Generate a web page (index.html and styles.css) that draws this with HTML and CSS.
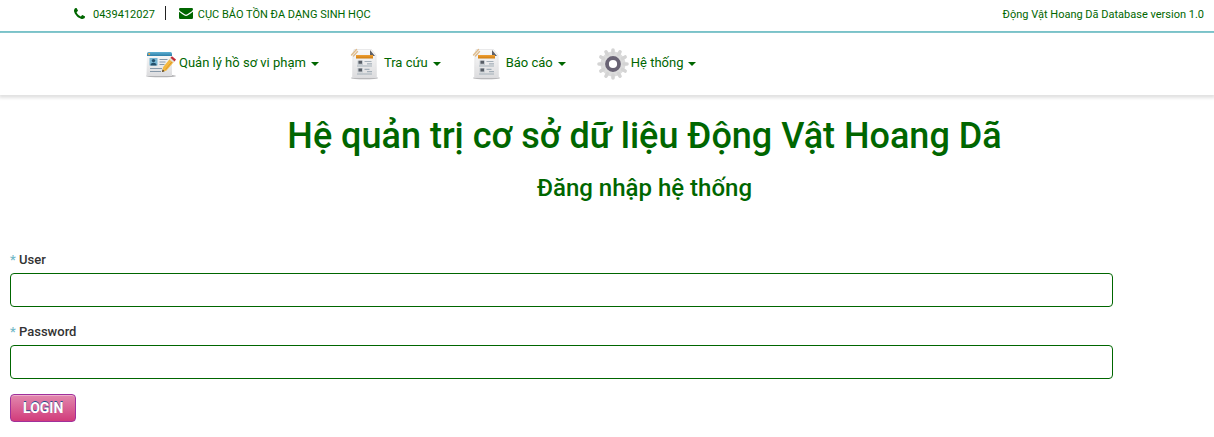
FILE: index.html
```html
<!DOCTYPE html>
<html lang="vi">
<head>
<meta charset="utf-8">
<title>Động Vật Hoang Dã Database</title>
<link rel="stylesheet" href="styles.css">
</head>
<body>
<svg class="defs" aria-hidden="true">
  <defs>
    <linearGradient id="paper" x1="0" y1="0" x2="0" y2="1"><stop offset="0" stop-color="#fafafa"/><stop offset="1" stop-color="#dcdcde"/></linearGradient>
    <linearGradient id="orange" x1="0" y1="0" x2="0" y2="1"><stop offset="0" stop-color="#f0a034"/><stop offset="1" stop-color="#cf7d10"/></linearGradient>
    <linearGradient id="blue" x1="0" y1="0" x2="0" y2="1"><stop offset="0" stop-color="#5fb0d3"/><stop offset="1" stop-color="#2e7fa8"/></linearGradient>
    <symbol id="report" viewBox="0 0 32 32">
      <ellipse cx="14.500" cy="30" rx="13.500" ry="1.300" fill="#a9a9ab"/>
      <path d="M4 1.500h17.500L26 7l.5 23H2.500L3 5z" fill="url(#paper)" stroke="#dcdcde" stroke-width=".6"/>
      <path d="M20 2l5 6h-5z" fill="#5d6068"/>
      <path d="M6 7h17v3.500H6z" fill="url(#orange)"/>
      <path d="M1.500 7L6.500 1.500M3.500 8L7.500 3.500" fill="none" stroke="#dfbc8c" stroke-width="1.400" stroke-linecap="round"/>
      <path d="M7.500 12.500h5.500v4.500H7.500zM7.500 20h5.500v4.500H7.500z" fill="#c5cbd0"/>
      <path d="M8.500 12.800h3.500v3H8.500zM8.500 20.500h3.500v3H8.500z" fill="#575d65"/>
      <path d="M14.500 13.500h7M17 15.800h5M7 18h15M14.500 21.300h5M17 23.600h5M7 26h15" stroke="#a4afb8" stroke-width="1.200"/>
    </symbol>
  </defs>
</svg>

<header class="topbar">
  <div class="contact">
    <span class="contact-item phone">
      <svg class="icon-phone" viewBox="0 0 1408 1408" aria-hidden="true"><path d="M1408 1112q0 27-10 70.500t-21 68.500q-21 50-122 106-94 51-186 51-27 0-52.500-3.500t-57.500-12.500-47.500-14.500-55.500-20.500-49-18q-98-35-175-83-128-79-264.500-215.500T151 776q-48-77-83-175-3-9-18-49t-20.500-55.500T15 449 2.500 391.500-1 339q0-92 51-186Q106 52 156 31q25-11 68.500-21T295 0q14 0 21 3 18 6 53 76 11 19 30 54t35 63.500 31 53.500q3 4 17.500 25t21.500 35.500 7 28.500q0 20-28.500 50t-62 55-62 53-28.500 46q0 9 5 22.500t8.500 20.500 14 24 11.500 19q76 137 174 235t235 174q2 1 19 11.500t24 14 20.500 8.500 22.500 5q18 0 46-28.500t53-62 55-62 50-28.500q14 0 28.500 7t35.500 21.500 25 17.500q25 15 53.500 31t63.500 35 54 30q70 35 76 53 3 7 3 21z"/></svg>
      <span>0439412027</span>
    </span>
    <span class="contact-item">
      <svg class="icon-mail" viewBox="0 0 14 11" aria-hidden="true"><path d="M0 1.200Q0 0 1.200 0h11.600Q14 0 14 1.200c0 .8-.6 1.500-1.200 2L8.300 6.300Q7 7.200 5.700 6.300L1.200 3.200C.6 2.700 0 2 0 1.200zM0 3.700c2 1.600 3.500 2.500 5 3.600q2 1.400 4 0c1.500-1.100 3-2 5-3.600v6.100Q14 11 12.800 11H1.200Q0 11 0 9.800z"/></svg>
      <span>CỤC BẢO TỒN ĐA DẠNG SINH HỌC</span>
    </span>
  </div>
  <span>Động Vật Hoang Dã Database version 1.0</span>
</header>

<nav class="menu">
  <a class="menu-link" href="#">
    <svg class="menu-icon" viewBox="0 0 32 32" aria-hidden="true">
      <ellipse cx="16" cy="28" rx="15" ry="1.300" fill="#b2b2b4"/>
      <path d="M2 5h25v23H1.500z" fill="url(#paper)"/>
      <path d="M2 8V5.500Q2 4 3.500 4h22Q27 4 27 5.500V8z" fill="url(#blue)"/>
      <circle cx="4.200" cy="6" r="1" fill="#f2a33b"/>
      <path d="M4.500 10h8v7.500h-8z" fill="#78b6d3"/>
      <circle cx="8.500" cy="12.600" r="1.700" fill="#24506c"/>
      <path d="M5.500 17.500q0-2.700 3-2.700t3 2.700z" fill="#24506c"/>
      <path d="M14.500 11.500h8M14.500 14h6M14.500 16.500h5M5 20.500h12M5 23.500h11" stroke="#8799a9" stroke-width="1.200"/>
      <path d="M17 24l1.200-5L26 9.500l3.800 3.200L21.500 22.500z" fill="#f3b840"/>
      <path d="M20.500 21.500l8-9.500" stroke="#dc972b"/>
      <path d="M24.300 11.500l1.500-2 4 3.300-1.600 2z" fill="#e2dfd8"/>
      <path d="M25.500 9.800L27 8.200l4 3.400-1.400 1.900z" fill="#c22d39"/>
      <path d="M17 24l.6-2.600 2 1.800z" fill="#43372b"/>
    </svg>
    <span>Quản lý hồ sơ vi phạm</span><i class="caret"></i>
  </a>
  <a class="menu-link" href="#">
    <svg class="menu-icon" aria-hidden="true"><use href="#report"/></svg>
    <span>Tra cứu</span><i class="caret"></i>
  </a>
  <a class="menu-link" href="#">
    <svg class="menu-icon" aria-hidden="true"><use href="#report"/></svg>
    <span>Báo cáo</span><i class="caret"></i>
  </a>
  <a class="menu-link" href="#">
    <svg class="menu-icon" viewBox="0 0 32 32" aria-hidden="true">
      <circle cx="16" cy="16" r="9.500" fill="none" stroke="#dcdcdc" stroke-width="6"/>
      <g stroke="#d4d4d4" stroke-width="3.600" stroke-linecap="round">
        <path d="M16 5V2M16 27v3M5 16H2M27 16h3"/>
        <path d="M16 5V2M16 27v3M5 16H2M27 16h3" transform="rotate(30 16 16)"/>
        <path d="M16 5V2M16 27v3M5 16H2M27 16h3" transform="rotate(60 16 16)"/>
      </g>
      <circle cx="16" cy="16" r="6" fill="#fff" stroke="#696374" stroke-width="3.800"/>
    </svg>
    <span>Hệ thống</span><i class="caret"></i>
  </a>
</nav>

<main>
  <div class="headings">
    <h1>Hệ quản trị cơ sở dữ liệu Động Vật Hoang Dã</h1>
    <h2>Đăng nhập hệ thống</h2>
  </div>
  <form class="login">
    <div class="field">
      <label for="user"><span class="required">*</span> User</label>
      <input id="user" type="text">
    </div>
    <div class="field">
      <label for="password"><span class="required">*</span> Password</label>
      <input id="password" type="password">
    </div>
    <button type="submit">LOGIN</button>
  </form>
</main>
</body>
</html>
```
FILE: styles.css
```css
* {
  box-sizing: border-box;
}

body {
  margin: 0;
  background: #fff;
  color: #060;
  font-family: Roboto, "Open Sans", sans-serif;
  font-size: 13px;
  line-height: 20px;
}

.defs {
  position: absolute;
  width: 0;
  height: 0;
}

.topbar {
  display: flex;
  justify-content: space-between;
  padding: 5px 10px 6px 74px;
  border-bottom: 2px solid #73c1c8;
  font-size: 11px;
}

.contact,
.contact-item {
  display: flex;
  align-items: center;
}

.contact-item {
  gap: 5px;
}

.contact-item svg {
  fill: #060;
}

.phone {
  gap: 8px;
}

.phone::after {
  content: "";
  width: 1px;
  height: 14px;
  margin: 0 13px 4px 2px;
  background: #222;
}

.icon-phone {
  width: 11px;
  height: 11px;
  margin-bottom: 4px;
}

.icon-mail {
  width: 14px;
  height: 11px;
  margin-bottom: 3px;
}

.menu {
  display: flex;
  flex-wrap: wrap;
  gap: 0 31px;
  padding: 15px 10px 15px 145px;
  box-shadow: 0 2px 3px 1px #e2e2e2;
}

.menu-link {
  display: flex;
  align-items: center;
  color: #060;
  text-decoration: none;
}

.menu-link span {
  padding: 0 5px 3px 2px;
}

.menu-icon {
  width: 32px;
  height: 32px;
}

.caret {
  border: 4px solid transparent;
  border-top-color: #060;
  border-bottom: 0;
}

.headings {
  padding: 21px 0 0 75px;
  text-align: center;
}

h1,
h2 {
  margin: 0;
  font-weight: 500;
}

h1 {
  font-size: 36px;
  line-height: 40px;
}

h2 {
  margin-top: 19px;
  font-size: 24px;
  line-height: 26px;
}

.login {
  width: 91.7%;
  padding: 49px 0 15px 10px;
}

.field {
  margin-bottom: 15px;
}

.login label {
  display: block;
  margin-bottom: 3px;
  color: #333;
  font-weight: 500;
}

.required {
  color: #73b9c8;
}

.login input {
  display: block;
  width: 100%;
  height: 34px;
  padding: 6px 12px;
  border: 1px solid #060;
  border-radius: 4px;
  background: #fff;
  color: #333;
  font: inherit;
}

.login button {
  height: 28px;
  padding: 0 12px;
  border: 1px solid #a0309c;
  border-radius: 4px;
  background: linear-gradient(#e288ae, #d13c7b);
  box-shadow: inset 0 1px 0 #eeb0ca;
  color: #fff;
  font: bold 14px/26px Roboto, "Open Sans", sans-serif;
  text-shadow: 0 -1px 0 #24508c;
}
```
